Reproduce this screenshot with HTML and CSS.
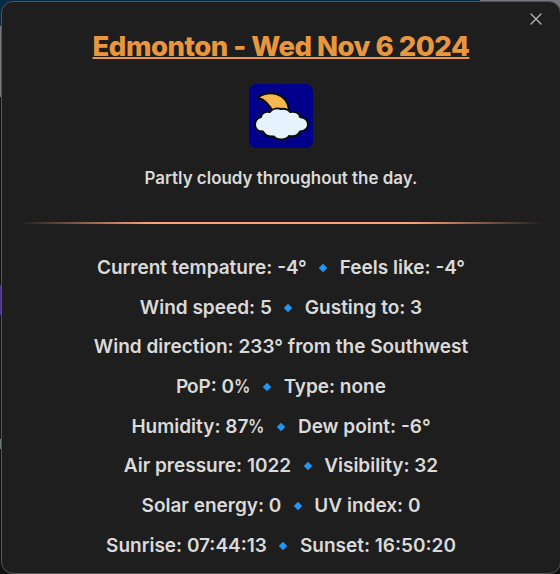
FILE: index.html
```
<!DOCTYPE html>
<html lang="en">
<head>
<meta charset="utf-8">
<title>Edmonton weather</title>
<link rel="stylesheet" href="styles.css">
</head>
<body>
<main class="modal">
  <button class="close" aria-label="Close"><svg viewBox="0 0 12 12"><path d="M1 1 11 11M11 1 1 11"/></svg></button>
  <h1 class="title">Edmonton - Wed Nov 6 2024</h1>
  <svg class="icon" viewBox="0 0 64 64">
    <rect width="64" height="64" rx="7"/>
    <path class="moon" d="M8.500 13.500C20 6 37 8 40 25L40 32 25 30C22 23 17 16 8.500 13.500Z"/>
    <path class="cloud" d="M14 47.500C9 47.500 6 44.500 6 40.500C6 36.500 9 33.500 12 33C12 29.500 16 27 21 28C24 24 29 24 32 25C36 24.500 39 25 41 28C47 27 51 29.500 51 33C56 33.500 59 36.500 59 40.500C59 44 56 47.500 51 47.500C49 52 45 53 40 52C38 56.500 27 56.500 25 52.500C20 53 16 52 14 47.500Z"/>
  </svg>
  <p class="summary">Partly cloudy throughout the day.</p>
  <hr class="rule">
  <div class="details">
    <p><span>Current tempature: -4°</span><i></i><span>Feels like: -4°</span></p>
    <p><span>Wind speed: 5</span><i></i><span>Gusting to: 3</span></p>
    <p><span>Wind direction: 233° from the Southwest</span></p>
    <p><span><span class="kern">P</span>oP: 0<span class="percent">%</span></span><i></i><span><span class="kern">T</span>ype: none</span></p>
    <p><span>Humidity: 87<span class="percent">%</span></span><i></i><span>Dew point: -6°</span></p>
    <p><span>Air pressure: 1022</span><i></i><span>Visibility: 32</span></p>
    <p><span>Solar energy: 0</span><i></i><span>UV index: 0</span></p>
    <p><span>Sunrise: 07:44:13</span><i></i><span>Sunset: 16:50:20</span></p>
  </div>
</main>
</body>
</html>
```
FILE: styles.css
```
* { box-sizing: border-box; }
body {
  margin: 0;
  height: 574px;
  padding: 1px 0 0 1px;
  overflow: hidden;
  background:
    linear-gradient(90deg, #052c43 480px, #74747c 480px) 0 0 / 100% 12px no-repeat,
    linear-gradient(#052c43 26px, #777 26px 97px, #111 97px 285px, #512e94 285px 315px, #161616 315px 439px, #69777b 439px 449px, #111 449px) 0 0 / 12px 100% no-repeat,
    #111;
  font-family: Inter, "Liberation Sans", sans-serif;
  color: #dadada;
}
.modal {
  position: relative;
  width: 560px;
  height: 573px;
  display: flex;
  flex-direction: column;
  align-items: center;
  background: #1e1e1e;
  border: 1px solid #555;
  border-radius: 12px;
}
.close {
  position: absolute;
  top: 11px;
  right: 18px;
  width: 12px;
  height: 12px;
  padding: 0;
  border: 0;
  background: none;
}
.close svg {
  display: block;
  width: 12px;
  height: 12px;
  fill: none;
  stroke: #b3b3b3;
  stroke-width: 1.4;
  stroke-linecap: round;
}
.title {
  margin: 26px 0 0;
  font-size: 27.500px;
  line-height: 36px;
  font-weight: 800;
  letter-spacing: -0.018em;
  color: #e9973f;
  text-decoration: underline;
  text-decoration-thickness: 2px;
  white-space: nowrap;
}
.icon {
  width: 64px;
  height: 64px;
  margin-top: 20px;
  fill: #00008b;
}
.moon, .cloud { stroke: #0a0a0a; stroke-width: 2; stroke-linejoin: round; }
.moon { fill: #f8b84e; }
.cloud { fill: #e6f3fe; }
.summary {
  margin: 18px 0 0;
  font-size: 16.950px;
  line-height: 24px;
  font-weight: 600;
}
.rule {
  width: 524px;
  height: 2px;
  margin: 32px 0 0;
  border: 0;
  background: linear-gradient(90deg, transparent, #ffa07a 25%, #ffa07a 75%, transparent);
}
.details { margin-top: 23.600px; }
.details p {
  display: flex;
  justify-content: center;
  align-items: center;
  height: 39.670px;
  margin: 0;
  font-size: 19px;
  font-weight: 600;
  white-space: nowrap;
}
.details i {
  width: 6px;
  height: 6px;
  margin: 1px 13.500px 0;
  background: #2196f3;
  transform: rotate(45deg);
}
.kern { letter-spacing: -1.500px; }
.percent {
  display: inline-block;
  margin-right: -2.500px;
  transform: scaleX(0.86);
  transform-origin: left;
}
```
